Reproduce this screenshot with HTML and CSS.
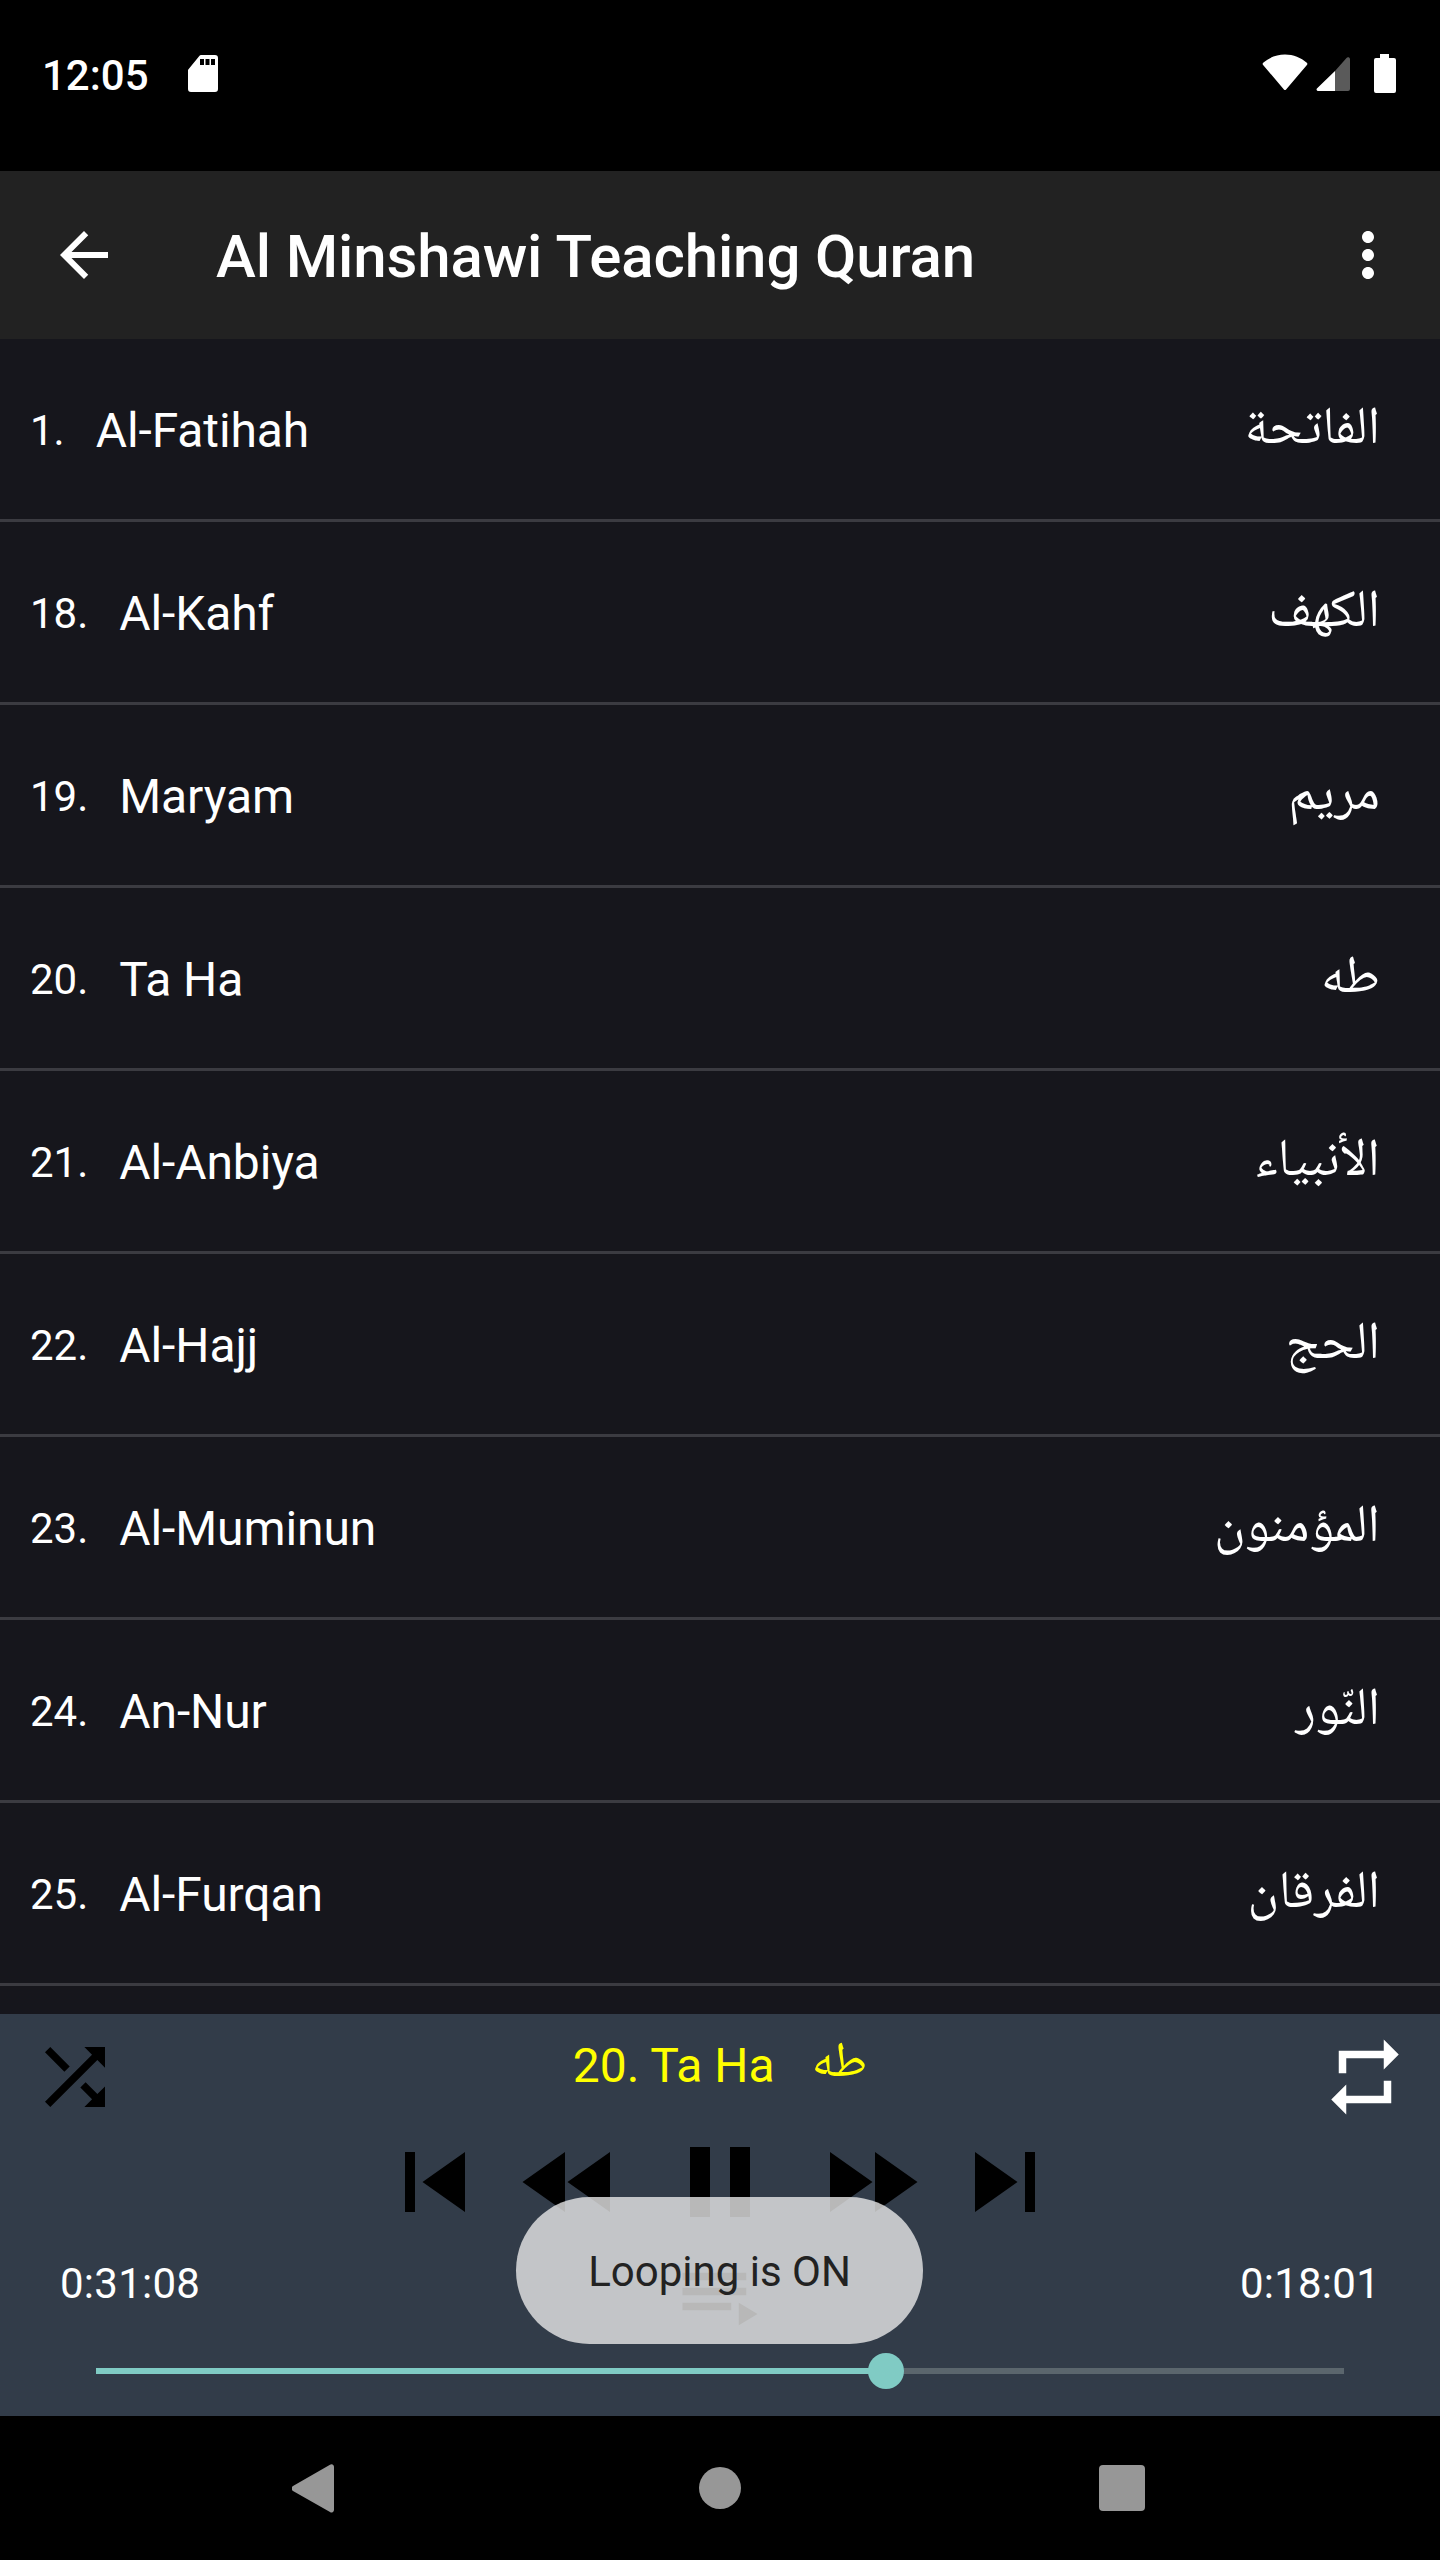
FILE: index.html
```html
<!DOCTYPE html>
<html lang="en">
<head>
<meta charset="utf-8">
<title>Al Minshawi Teaching Quran</title>
<link rel="stylesheet" href="styles.css">
</head>
<body>
<div class="phone">
  <header class="status">
    <div class="status-left">
      <span class="clock">12:05</span>
      <svg class="sd" viewBox="0 0 30 37"><path fill-rule="evenodd" d="M13 0h14a3 3 0 0 1 3 3v31a3 3 0 0 1-3 3H3a3 3 0 0 1-3-3V15.500a2 2 0 0 1 .5-1.300L11.500.800A2 2 0 0 1 13 0zM12 4v6h4V4zM17.500 4v6h4V4zM23 4v6h4V4z"/></svg>
    </div>
    <div class="status-right">
      <svg class="wifi" viewBox="0 0 46 36"><path d="M1.200 8.800C7 3.600 14.500.500 23 .500S39 3.600 44.800 8.800a1.500 1.500 0 0 1 .1 2.100L24.100 35.400a1.500 1.500 0 0 1-2.200 0L1.100 10.900a1.500 1.500 0 0 1 .1-2.100z"/></svg>
      <svg class="signal" viewBox="0 0 34 34"><path class="sig-dim" d="M19 14 30.500.900A2 2 0 0 1 34 2.200V32a2 2 0 0 1-2 2H19z"/><path d="M19 14v20H2a1.500 1.500 0 0 1-1.100-2.500z"/></svg>
      <svg class="battery" viewBox="0 0 22 39"><path d="M6 0h9v4h5a2 2 0 0 1 2 2v31a2 2 0 0 1-2 2H2a2 2 0 0 1-2-2V6a2 2 0 0 1 2-2h4z"/></svg>
    </div>
  </header>

  <div class="toolbar">
    <svg class="tb-icon" viewBox="0 0 24 24"><path d="M20 11H7.830l5.590-5.590L12 4l-8 8 8 8 1.410-1.410L7.830 13H20v-2z"/></svg>
    <h1 class="title">Al Minshawi Teaching Quran</h1>
    <svg class="tb-icon" viewBox="0 0 24 24"><path d="M12 8c1.100 0 2-.9 2-2s-.9-2-2-2-2 .9-2 2 .9 2 2 2zm0 2c-1.100 0-2 .9-2 2s.9 2 2 2 2-.9 2-2-.9-2-2-2zm0 6c-1.100 0-2 .9-2 2s.9 2 2 2 2-.9 2-2-.9-2-2-2z"/></svg>
  </div>

  <main class="list">
    <div class="row"><span class="num">1.</span><span class="name">Al-Fatihah</span><span class="ar" lang="ar" dir="rtl">الفاتحة</span></div>
    <div class="row"><span class="num">18.</span><span class="name">Al-Kahf</span><span class="ar" lang="ar" dir="rtl">الكهف</span></div>
    <div class="row"><span class="num">19.</span><span class="name">Maryam</span><span class="ar" lang="ar" dir="rtl">مريم</span></div>
    <div class="row"><span class="num">20.</span><span class="name">Ta Ha</span><span class="ar" lang="ar" dir="rtl">طه</span></div>
    <div class="row"><span class="num">21.</span><span class="name">Al-Anbiya</span><span class="ar" lang="ar" dir="rtl">الأنبياء</span></div>
    <div class="row"><span class="num">22.</span><span class="name">Al-Hajj</span><span class="ar" lang="ar" dir="rtl">الحج</span></div>
    <div class="row"><span class="num">23.</span><span class="name">Al-Muminun</span><span class="ar" lang="ar" dir="rtl">المؤمنون</span></div>
    <div class="row"><span class="num">24.</span><span class="name">An-Nur</span><span class="ar" lang="ar" dir="rtl">النّور</span></div>
    <div class="row"><span class="num">25.</span><span class="name">Al-Furqan</span><span class="ar" lang="ar" dir="rtl">الفرقان</span></div>
  </main>

  <section class="player">
    <div class="player-top">
      <svg class="mode-icon shuffle" viewBox="0 0 24 24"><path d="M10.590 9.170L5.410 4 4 5.410l5.170 5.170 1.420-1.410zM14.500 4l2.040 2.040L4 18.590 5.410 20 17.960 7.460 20 9.500V4h-5.500zm.33 9.410l-1.410 1.410 3.130 3.130L14.500 20H20v-5.500l-2.040 2.040-3.130-3.130z"/></svg>
      <div class="now">
        <span class="now-name">20. Ta Ha</span>
        <span class="now-ar" lang="ar" dir="rtl">طه</span>
      </div>
      <svg class="mode-icon repeat" viewBox="0 0 24 24"><path d="M7 7h10v3l4-4-4-4v3H5v6h2V7zm10 10H7v-3l-4 4 4 4v-3h12v-6h-2v4z"/></svg>
    </div>
    <div class="controls">
      <svg class="ctl" viewBox="0 0 24 24"><path d="M6 6h2v12H6zm3.500 6l8.500 6V6z"/></svg>
      <svg class="ctl" viewBox="0 0 24 24"><path d="M11 18V6l-8.500 6 8.500 6zm.5-6l8.500 6V6l-8.500 6z"/></svg>
      <svg class="ctl main-ctl" viewBox="0 0 24 24"><path d="M6 19h4V5H6v14zm8-14v14h4V5h-4z"/></svg>
      <svg class="ctl" viewBox="0 0 24 24"><path d="M4 18l8.500-6L4 6v12zm9-12v12l8.500-6L13 6z"/></svg>
      <svg class="ctl" viewBox="0 0 24 24"><path d="M6 18l8.500-6L6 6v12zM16 6v12h2V6h-2z"/></svg>
    </div>
    <div class="times">
      <span class="time">0:31:08</span>
      <svg class="queue" viewBox="0 0 24 24"><path d="M19 9H2v2h17V9zm0-4H2v2h17V5zM2 15h13v-2H2v2zm15-2v6l5-3-5-3z"/></svg>
      <span class="time">0:18:01</span>
    </div>
    <div class="seek">
      <div class="seek-fill"></div>
      <div class="seek-thumb"></div>
    </div>
    <div class="toast">Looping is ON</div>
  </section>

  <nav class="navbar">
    <svg class="nav-back" viewBox="0 0 42 49"><path d="M38 .8a2.500 2.500 0 0 1 4 2V46a2.500 2.500 0 0 1-4 2L1 27a3 3 0 0 1 0-5z"/></svg>
    <div class="nav-home"></div>
    <div class="nav-recent"></div>
  </nav>
</div>
</body>
</html>
```

FILE: styles.css
```css
* { box-sizing: border-box; }
html, body { margin: 0; padding: 0; background: #000; }
.phone {
  width: 1440px;
  height: 2560px;
  display: flex;
  flex-direction: column;
  font-family: Roboto, "Noto Sans", sans-serif;
  color: #fff;
  overflow: hidden;
}

.status {
  height: 171px;
  flex: none;
  background: #000;
  display: flex;
  justify-content: space-between;
  padding: 54px 44px 0 42px;
}
.status-left { display: flex; align-items: flex-start; }
.clock { font-size: 42px; font-weight: 500; line-height: 42px; margin-top: 1px; }
.sd { width: 30px; height: 37px; margin: 1px 0 0 39px; fill: #fff; }
.status-right { display: flex; align-items: flex-start; }
.wifi { width: 46px; height: 36px; fill: #fff; }
.signal { width: 34px; height: 34px; margin: 3px 0 0 8px; fill: #fff; }
.sig-dim { fill: #5a5a5a; }
.battery { width: 22px; height: 39px; margin-left: 24px; fill: #fff; }

.toolbar {
  height: 168px;
  flex: none;
  background: #222;
  display: flex;
  align-items: center;
  padding: 0 36px 0 48px;
}
.tb-icon { width: 72px; height: 72px; fill: #fff; flex: none; }
.title {
  flex: 1;
  margin: 4px 0 0 96px;
  font-size: 60px;
  font-weight: 500;
  line-height: 70px;
  letter-spacing: -0.12px;
  color: #fff;
}

.list {
  flex: 1;
  min-height: 0;
  background: #16161c;
  overflow: hidden;
}
.row {
  height: 183px;
  display: flex;
  align-items: center;
  padding: 2px 60px 0 30px;
  border-bottom: 3px solid #3b3b41;
}
.num { font-size: 42px; margin-right: 31px; }
.name { font-size: 48px; flex: 1; letter-spacing: -0.1px; }
.ar {
  font-size: 53px;
  font-family: "Noto Naskh Arabic", "Noto Sans Arabic", "DejaVu Sans", sans-serif;
  margin-top: 2px;
}

.player {
  position: relative;
  flex: none;
  height: 402px;
  background: #323c49;
  padding: 18px 30px 0;
}
.player-top {
  display: flex;
  justify-content: space-between;
  align-items: flex-start;
  height: 90px;
}
.mode-icon { width: 90px; height: 90px; flex: none; }
.shuffle { fill: #000; }
.repeat { fill: #fff; }
.now {
  display: flex;
  align-items: flex-start;
  gap: 37px;
  color: #ff0;
  font-size: 48px;
  line-height: 56px;
  margin-top: 6px;
}
.now-ar { font-family: "Noto Naskh Arabic", "Noto Sans Arabic", "DejaVu Sans", sans-serif; font-size: 50px; line-height: 48px; margin-top: 4px; }
.controls {
  display: flex;
  justify-content: center;
  height: 120px;
}
.ctl { width: 120px; height: 120px; fill: #000; margin: 0 7.5px; flex: none; }
.main-ctl { margin: 0 22.5px; }
.times {
  display: flex;
  justify-content: space-between;
  align-items: flex-start;
  padding: 0 30px;
  height: 90px;
  margin-top: 12px;
}
.time { font-size: 42px; line-height: 50px; margin-top: 5px; letter-spacing: 0.25px; color: #fff; }
.queue { width: 90px; height: 90px; fill: #000; flex: none; }
.seek {
  position: absolute;
  left: 96px;
  top: 354px;
  width: 1248px;
  height: 6px;
  background: #5b666d;
}
.seek-fill { width: 790px; height: 6px; background: #80cbc4; }
.seek-thumb {
  position: absolute;
  left: 772px;
  top: -15px;
  width: 36px;
  height: 36px;
  border-radius: 50%;
  background: #80cbc4;
}
.toast {
  position: absolute;
  left: 516px;
  top: 183px;
  width: 407px;
  height: 147px;
  border-radius: 74px;
  background: rgba(236, 236, 236, 0.78);
  color: #222;
  font-size: 42px;
  padding-top: 2px;
  display: flex;
  align-items: center;
  justify-content: center;
}

.navbar {
  height: 144px;
  flex: none;
  background: #000;
  position: relative;
}
.nav-back { position: absolute; left: 292px; top: 48px; width: 42px; height: 49px; fill: #979797; }
.nav-home { position: absolute; left: 699px; top: 51px; width: 42px; height: 42px; border-radius: 50%; background: #979797; }
.nav-recent { position: absolute; left: 1099px; top: 49px; width: 46px; height: 46px; border-radius: 4px; background: #979797; }
```
